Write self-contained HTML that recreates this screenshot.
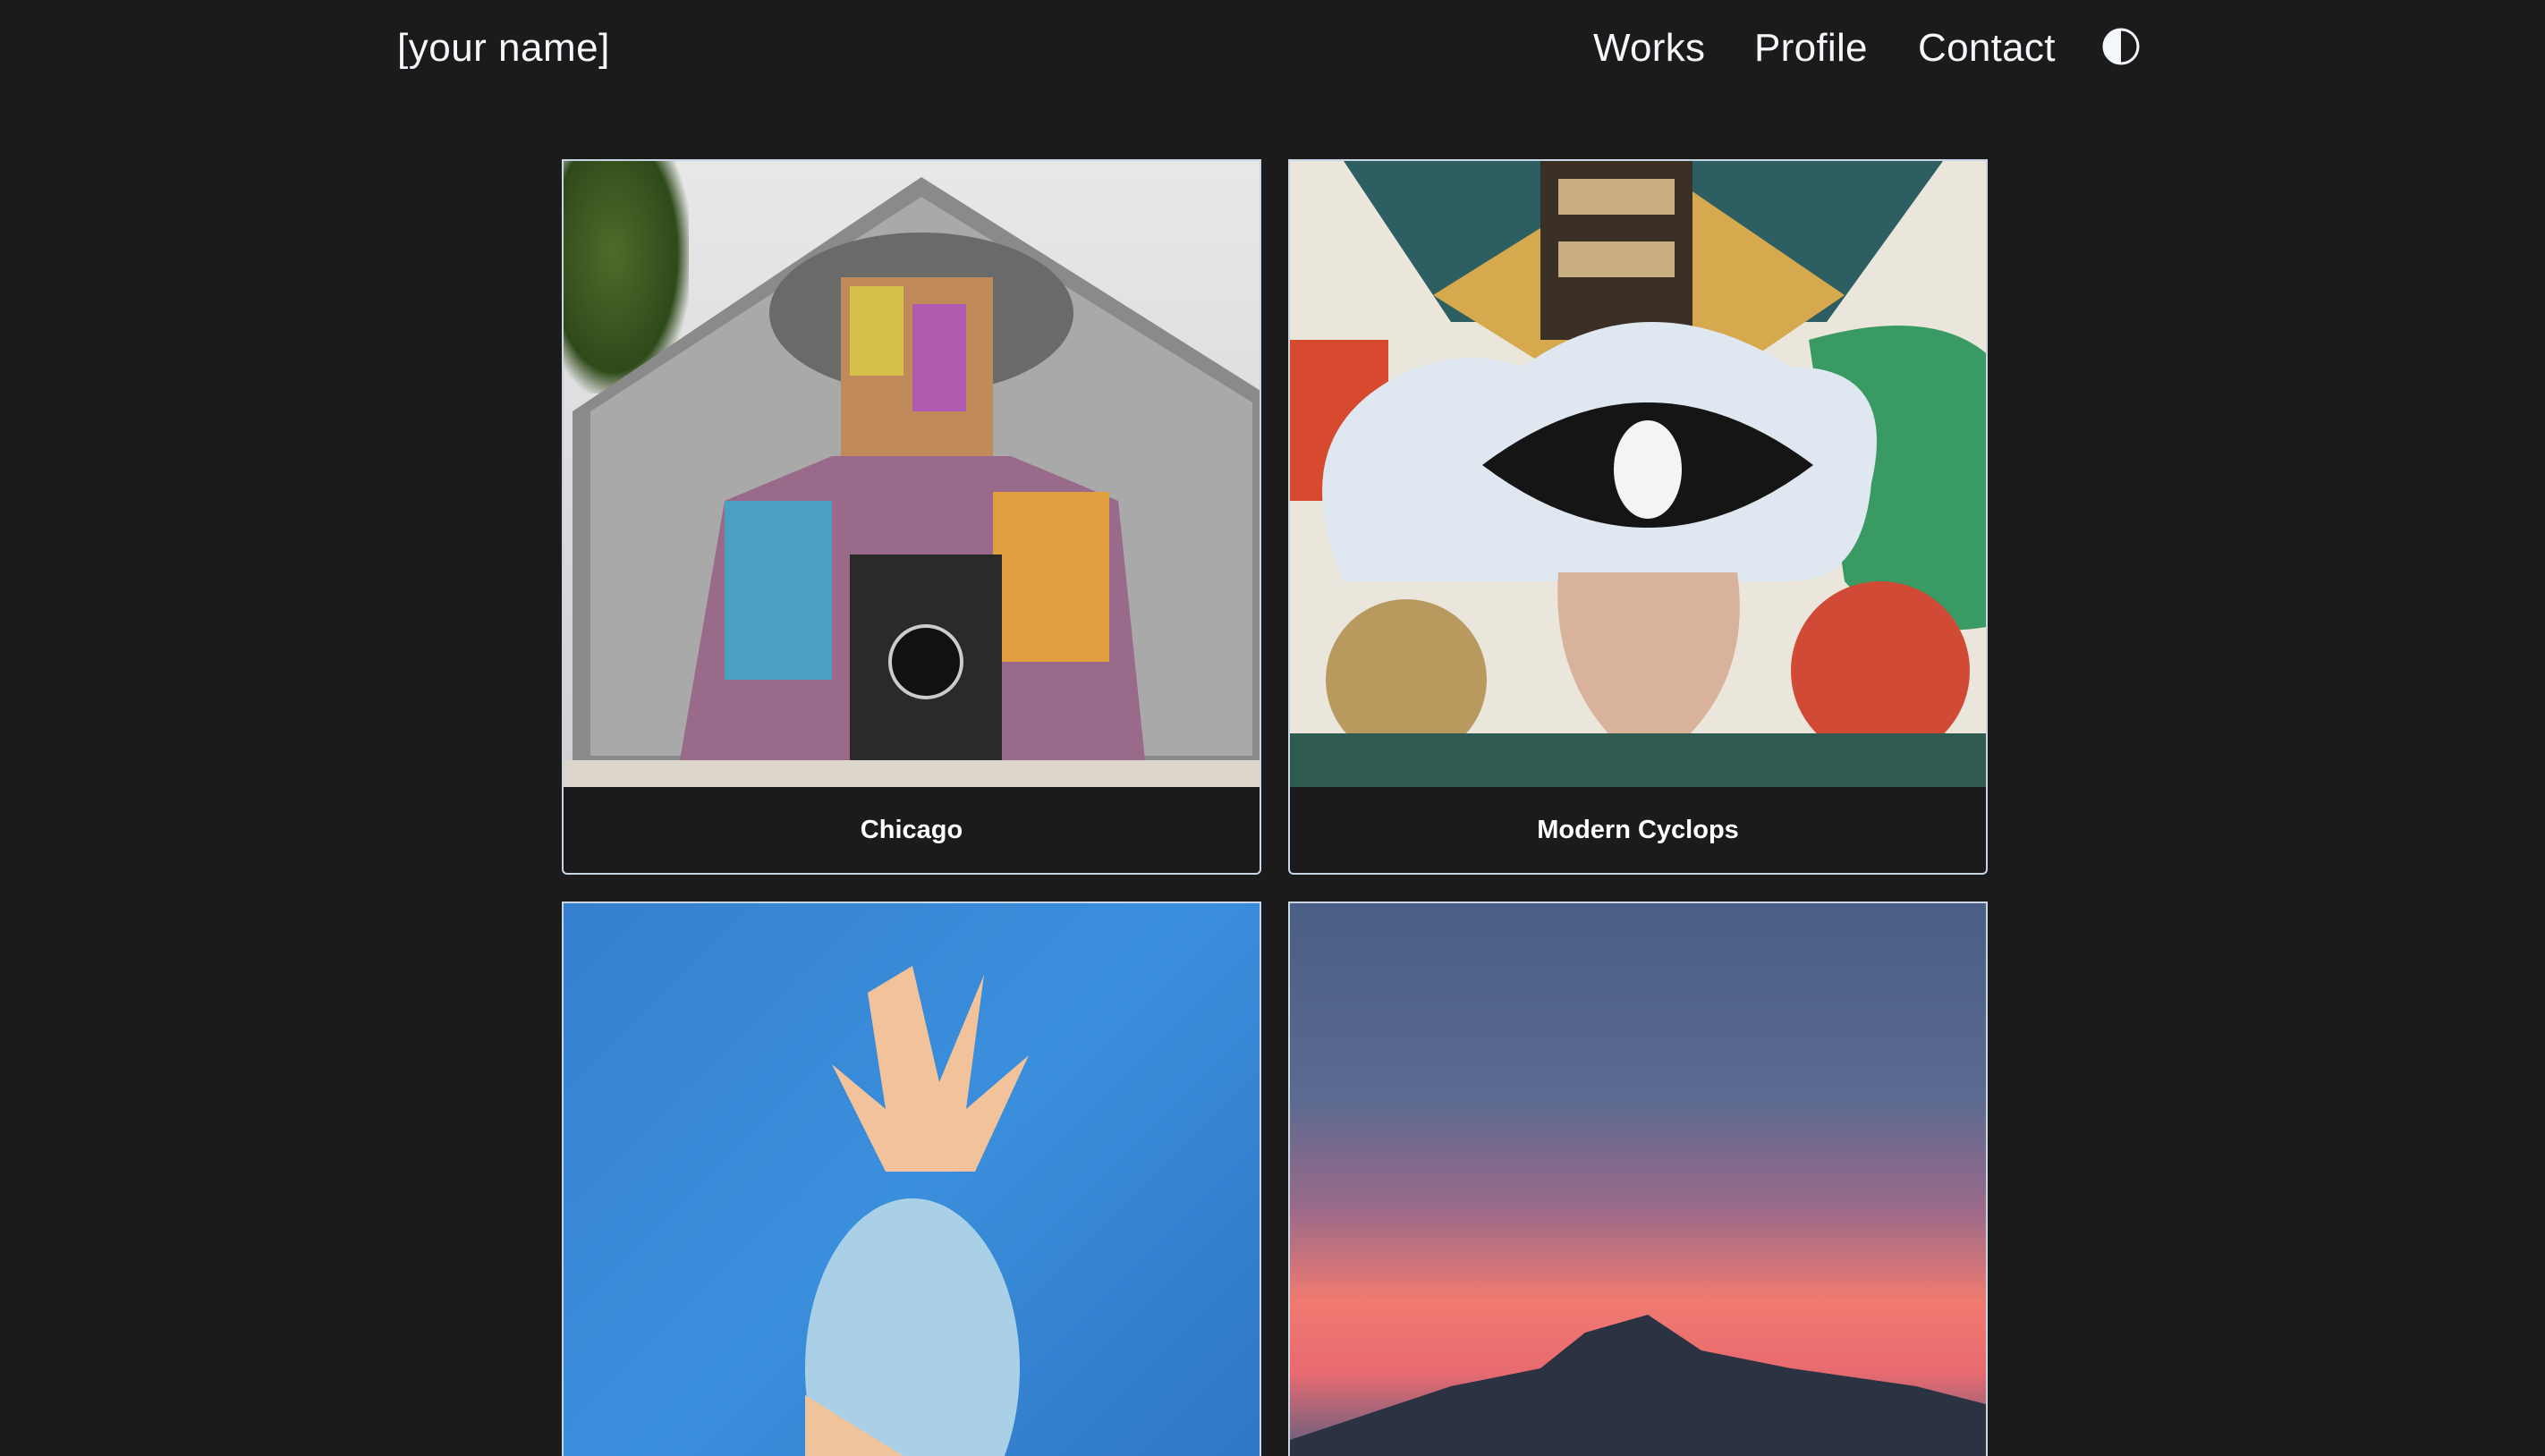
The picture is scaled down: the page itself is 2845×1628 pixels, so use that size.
<!DOCTYPE html>
<html><head><meta charset="utf-8"><style>
html,body{margin:0;padding:0;background:#1b1b1b;width:2845px;height:1626px;overflow:hidden;font-family:"Liberation Sans",sans-serif;color:#f4f7fb}
.name{position:absolute;left:444px;top:28px;font-size:44px;line-height:52px;letter-spacing:0.5px}
.nav{position:absolute;top:28px;font-size:44px;line-height:52px;letter-spacing:0.3px}
.card{position:absolute;width:778px;border:2px solid #c9d5e2;border-radius:0 0 6px 6px;background:#1b1b1b;overflow:hidden}
.img{height:700px;position:relative;overflow:hidden}
.lab{height:96px;line-height:96px;text-align:center;font-weight:bold;font-size:29px;color:#fff}
</style></head><body>
<div class="name">[your name]</div>
<div class="nav" style="left:1781px">Works</div>
<div class="nav" style="left:1961px">Profile</div>
<div class="nav" style="left:2144px">Contact</div>
<svg style="position:absolute;left:2350px;top:31px" width="42" height="42" viewBox="0 0 42 42"><circle cx="21" cy="21" r="19" fill="none" stroke="#f4f7fb" stroke-width="3"/><path d="M21 2 A19 19 0 0 0 21 40 Z" fill="#f4f7fb"/></svg>

<div class="card" style="left:628px;top:178px">
 <div class="img" style="background:linear-gradient(#e8e8e8,#d0d0d0)">
  <div style="position:absolute;left:0;top:0;width:140px;height:260px;background:radial-gradient(ellipse at 40% 40%,#4f6b2a,#2f4a1a 60%,transparent 75%)"></div>
  <svg style="position:absolute;left:0;top:0" width="778" height="700"><polygon points="10,280 400,18 784,260 784,670 10,670" fill="#8a8a8a"/><polygon points="30,280 400,40 770,270 770,665 30,665" fill="#a9a9a9"/>
  <ellipse cx="400" cy="170" rx="170" ry="90" fill="#6a6a6a"/><rect x="310" y="130" width="170" height="250" fill="#c08a5a"/><rect x="320" y="140" width="60" height="100" fill="#d6c04a"/><rect x="390" y="160" width="60" height="120" fill="#b05ab0"/>
  <polygon points="130,670 180,380 300,330 500,330 620,380 650,670" fill="#9a6a8a"/><rect x="180" y="380" width="120" height="200" fill="#4aa0c0"/><rect x="480" y="370" width="130" height="190" fill="#e0a040"/><rect x="320" y="440" width="170" height="230" fill="#2a2a2a"/><circle cx="405" cy="560" r="40" fill="#111" stroke="#ccc" stroke-width="4"/>
  <rect x="0" y="670" width="784" height="30" fill="#dcd6cc"/></svg>
 </div>
 <div class="lab">Chicago</div>
</div>

<div class="card" style="left:1440px;top:178px">
 <div class="img" style="background:#eae6dc">
  <svg style="position:absolute;left:0;top:0" width="778" height="700"><polygon points="60,0 730,0 600,180 180,180" fill="#2c5e62"/><polygon points="160,150 400,0 620,150 400,300" fill="#d7a94e"/><rect x="280" y="0" width="170" height="200" fill="#3a3026"/><rect x="300" y="20" width="130" height="40" fill="#c8ad80"/><rect x="300" y="90" width="130" height="40" fill="#c8ad80"/>
  <rect x="0" y="200" width="110" height="180" fill="#d84a30"/><path d="M580 200 Q720 160 784 220 L784 520 Q680 540 620 470 Z" fill="#3a9a64"/>
  <path d="M60 470 Q0 330 90 260 Q170 200 260 230 Q400 130 560 230 Q680 230 650 360 Q640 470 560 470 Z" fill="#dfe8f0"/>
  <path d="M215 340 Q400 200 585 340 Q400 480 215 340 Z" fill="#151515"/><ellipse cx="400" cy="345" rx="38" ry="55" fill="#f4f4f4"/>
  <path d="M300 460 L500 460 Q520 600 400 680 Q290 600 300 460Z" fill="#d8b29a"/>
  <circle cx="130" cy="580" r="90" fill="#b89a5e"/><circle cx="660" cy="570" r="100" fill="#d04a36"/><rect x="0" y="640" width="784" height="60" fill="#2f5a50"/></svg>
 </div>
 <div class="lab">Modern Cyclops</div>
</div>

<div class="card" style="left:628px;top:1008px;height:618px;border-bottom:none;border-radius:0">
 <div class="img" style="height:618px;background:linear-gradient(135deg,#3680cf,#3a8fdc 50%,#2f76c6)">
  <svg style="position:absolute;left:0;top:0" width="778" height="618"><path d="M390 70 L420 200 L470 80 L450 230 L520 170 L460 300 L360 300 L300 180 L360 230 L340 100 Z" fill="#f2c39a"/><ellipse cx="390" cy="520" rx="120" ry="190" fill="#a9d0e6"/><polygon points="270,550 380,618 270,618" fill="#f0c49a"/></svg>
 </div>
</div>

<div class="card" style="left:1440px;top:1008px;height:618px;border-bottom:none;border-radius:0">
 <div class="img" style="height:618px;background:linear-gradient(#4a5f86 0%,#5a6a90 35%,#9a6a8a 55%,#f07a70 72%,#e86a70 85%,#5a5f80 100%)">
  <svg style="position:absolute;left:0;top:0" width="778" height="618"><polygon points="0,600 180,540 280,520 330,480 400,460 460,500 560,520 700,540 778,560 778,618 0,618" fill="#2b3242"/></svg>
 </div>
</div>
</body></html>
